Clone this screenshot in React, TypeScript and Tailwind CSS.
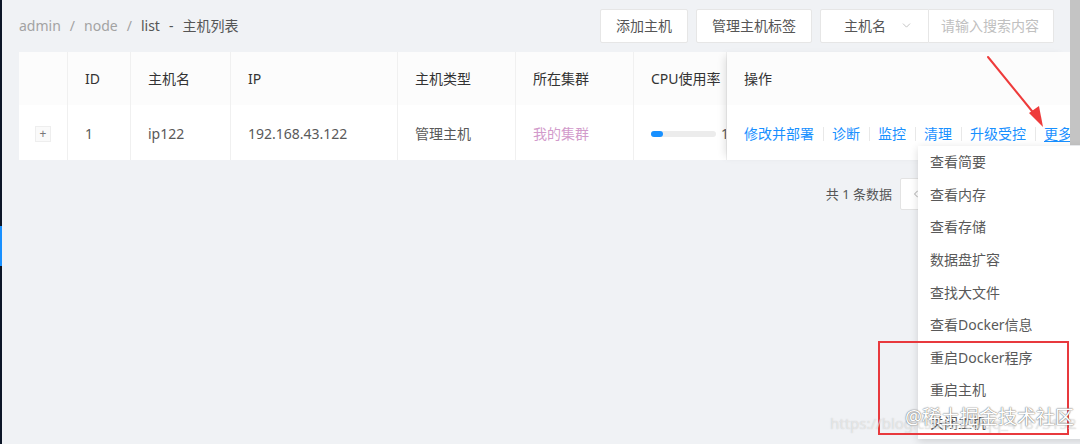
import { ChevronDown, ChevronLeft } from "lucide-react";

const FONT = { fontFamily: '"Noto Sans", "Noto Sans CJK SC", sans-serif' };

const COLS = [
  { key: "expand", title: "", w: "w-[49px]" },
  { key: "id", title: "ID", w: "w-[63px]" },
  { key: "name", title: "主机名", w: "w-[100px]" },
  { key: "ip", title: "IP", w: "w-[167px]" },
  { key: "type", title: "主机类型", w: "w-[118px]" },
  { key: "cluster", title: "所在集群", w: "w-[118px]" },
  { key: "cpu", title: "CPU使用率", w: "w-[93px]" },
];

const ACTIONS = ["修改并部署", "诊断", "监控", "清理", "升级受控"];

const MENU = [
  "查看简要",
  "查看内存",
  "查看存储",
  "数据盘扩容",
  "查找大文件",
  "查看Docker信息",
  "重启Docker程序",
  "重启主机",
  "关闭主机",
];

function Cell({ col }: { col: string }) {
  switch (col) {
    case "expand":
      return (
        <span className="flex h-4 w-4 items-center justify-center border border-[#eeeeee] bg-[#fafafa] text-[12px] leading-none text-[#777]">
          +
        </span>
      );
    case "id":
      return <span>1</span>;
    case "name":
      return <span>ip122</span>;
    case "ip":
      return <span>192.168.43.122</span>;
    case "type":
      return <span>管理主机</span>;
    case "cluster":
      return <span className="text-[#d29bcb]">我的集群</span>;
    case "cpu":
      return (
        <div className="flex items-center gap-[5px]">
          <div className="h-[6px] w-[65px] shrink-0 rounded-full bg-[#ececec]">
            <div className="h-[6px] w-[12px] rounded-full bg-[#1890ff]" />
          </div>
          <span className="shrink-0">1%</span>
        </div>
      );
    default:
      return null;
  }
}

export default function App() {
  return (
    <div
      className="relative flex h-[444px] w-[1080px] overflow-hidden bg-[#f0f2f5] text-sm antialiased"
      style={FONT}
    >
      {/* sidebar edge */}
      <div className="w-[2px] shrink-0 bg-[#0c1627] pt-[226px]">
        <div className="h-[40px] bg-[#1890ff]" />
      </div>

      <main className="flex min-w-0 flex-1 flex-col pl-[17px]">
        {/* Top bar */}
        <div className="flex h-[52px] items-center justify-between pr-[16px] pb-[1px]">
          <div className="flex items-center gap-[9px] text-[14px] text-[#a3a3a3]">
            <span>admin</span>
            <span>/</span>
            <span>node</span>
            <span>/</span>
            <span className="text-[#555]">list</span>
            <span className="text-[#555]">-</span>
            <span className="text-[#555]">主机列表</span>
          </div>
          <div className="flex items-center gap-2">
            <button className="h-[34px] rounded-[2px] border border-[#e6e6e6] bg-white px-[15px] text-[#555]">
              添加主机
            </button>
            <button className="h-[34px] rounded-[2px] border border-[#e6e6e6] bg-white px-[15px] text-[#555]">
              管理主机标签
            </button>
            <div className="flex h-[34px]">
              <div className="flex w-[109px] items-center rounded-l-[2px] border border-[#e6e6e6] bg-white pl-[23px] text-[#555]">
                主机名
                <ChevronDown className="ml-[14px] h-[13px] w-[13px] text-[#b5b5b5]" strokeWidth={1.5} />
              </div>
              <div className="flex w-[125px] items-center rounded-r-[2px] border border-l-0 border-[#e6e6e6] bg-white pl-[12px] text-[#c0c0c0]">
                请输入搜索内容
              </div>
            </div>
          </div>
        </div>

        {/* Table */}
        <div className="flex h-[108px] bg-white">
          {COLS.map((c) => (
            <div
              key={c.key}
              className={`${c.w} flex shrink-0 flex-col overflow-hidden border-r border-[#f0f0f0] last:border-r-0`}
            >
              <div className="flex h-[53px] items-center bg-[#fcfcfc] pl-[17px] text-[#333]">
                {c.title}
              </div>
              <div
                className={`flex h-[55px] items-center pt-[3px] text-[#595959] ${
                  c.key === "expand" ? "pl-[16px]" : "pl-[17px]"
                }`}
              >
                <Cell col={c.key} />
              </div>
            </div>
          ))}
          <div className="relative z-10 flex min-w-0 flex-1 flex-col overflow-hidden bg-white shadow-[-6px_0_8px_-4px_rgba(0,0,0,0.12)]">
            <div className="flex h-[53px] items-center bg-[#fcfcfc] pl-[17px] text-[#333]">操作</div>
            <div className="flex h-[55px] items-center whitespace-nowrap pl-[17px] pt-[3px] text-[#1890ff]">
              {ACTIONS.map((a) => (
                <span key={a} className="flex items-center">
                  {a}
                  <span className="mx-[8.5px] h-[14px] w-px bg-[#e8e8e8]" />
                </span>
              ))}
              <span className="underline underline-offset-2">更多操作</span>
            </div>
          </div>
        </div>

        {/* Pagination */}
        <div className="mt-[18px] flex items-center justify-end gap-2 pr-[58px] text-[13px] text-[#555]">
          <span>共 1 条数据</span>
          <span className="flex h-[32px] w-[32px] items-center justify-center rounded-[2px] border border-[#e3e3e3] bg-white text-[#aaa]">
            <ChevronLeft className="h-3 w-3" />
          </span>
          <span className="flex h-[32px] w-[32px] items-center justify-center rounded-[2px] border border-[#1890ff] bg-white text-[#1890ff]">
            1
          </span>
          <span className="flex h-[32px] w-[32px] items-center justify-center rounded-[2px] border border-[#e3e3e3] bg-white text-[#aaa]">
            ›
          </span>
        </div>
      </main>

      {/* scrollbar */}
      <div className="w-[10px] shrink-0">
        <div className="h-[145px] bg-[#c4c4c4]" />
      </div>

      {/* dropdown menu */}
      <ul className="absolute left-[918px] top-[146px] z-20 w-[170px] bg-white shadow-[0_2px_8px_rgba(0,0,0,0.15)]">
        {MENU.map((m) => (
          <li key={m} className="flex h-[32.6px] items-center pl-[12px] text-[14px] text-[#595959]">
            {m}
          </li>
        ))}
      </ul>

      {/* annotation: red box */}
      <div className="absolute left-[878px] top-[341px] z-30 h-[94px] w-[191px] border-2 border-[#e8393d]" />

      {/* annotation: red arrow */}
      <svg className="absolute left-0 top-0 z-30" width="1080" height="444" viewBox="0 0 1080 444">
        <line x1="988" y1="57" x2="1036" y2="116" stroke="#ee3b3b" strokeWidth="2" strokeLinecap="round" />
        <polygon points="1043,127 1029,113 1039,106" fill="#ee3b3b" />
      </svg>

      {/* watermarks */}
      <div className="absolute left-[830px] top-[413px] z-30 whitespace-nowrap text-[15px] text-white/50 [text-shadow:0_0_1px_rgba(150,150,150,0.5)]">
        https://blog.csdn.net/qq_41873152
      </div>
      <div className="absolute left-[905px] top-[404px] z-40 whitespace-nowrap text-[19px] text-white [text-shadow:0_0_1.5px_#666,0_0_1px_#888]">
        @稀土掘金技术社区
      </div>
    </div>
  );
}
